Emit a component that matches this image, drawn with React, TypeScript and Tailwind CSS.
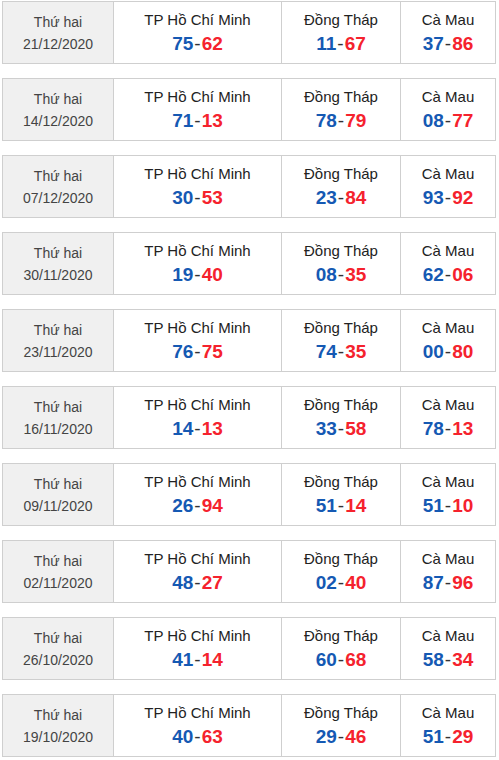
import React from "react";

const rows: [string, string[]][] = [
  ["21/12/2020", ["75-62", "11-67", "37-86"]],
  ["14/12/2020", ["71-13", "78-79", "08-77"]],
  ["07/12/2020", ["30-53", "23-84", "93-92"]],
  ["30/11/2020", ["19-40", "08-35", "62-06"]],
  ["23/11/2020", ["76-75", "74-35", "00-80"]],
  ["16/11/2020", ["14-13", "33-58", "78-13"]],
  ["09/11/2020", ["26-94", "51-14", "51-10"]],
  ["02/11/2020", ["48-27", "02-40", "87-96"]],
  ["26/10/2020", ["41-14", "60-68", "58-34"]],
  ["19/10/2020", ["40-63", "29-46", "51-29"]],
];

const names = ["TP Hồ Chí Minh", "Đồng Tháp", "Cà Mau"];
const widths = ["w-[168px]", "w-[119px]", "flex-1"];

function Cell({ name, pair, w }: { name: string; pair: string; w: string }) {
  const [a, b] = pair.split("-");
  return (
    <div className={`${w} border-l border-[#cfcfcf] flex flex-col items-center pt-[8px]`}>
      <div className="text-[15px] leading-[20px] text-[#222]">{name}</div>
      <div className="mt-[3px] text-[19px] leading-[22px] font-bold flex items-center">
        <span className="text-[#1559b3]">{a}</span>
        <span className="mx-px font-normal text-[#333]">-</span>
        <span className="text-[#f5222d]">{b}</span>
      </div>
    </div>
  );
}

export default function App() {
  return (
    <div
      className="w-[499px] bg-white pt-[1px] pl-[2px] flex flex-col gap-[14px]"
      style={{ fontFamily: '"Liberation Sans", Arial, sans-serif' }}
    >
      {rows.map(([date, nums]) => (
        <div key={date} className="w-[494px] h-[63px] border border-[#cfcfcf] flex">
          <div className="w-[110px] bg-[#f0f0f0] flex flex-col items-center pt-[9px] text-[14px] leading-[22px] text-[#444]">
            <div>Thứ hai</div>
            <div>{date}</div>
          </div>
          {nums.map((n, i) => (
            <Cell key={i} name={names[i]} pair={n} w={widths[i]} />
          ))}
        </div>
      ))}
    </div>
  );
}
